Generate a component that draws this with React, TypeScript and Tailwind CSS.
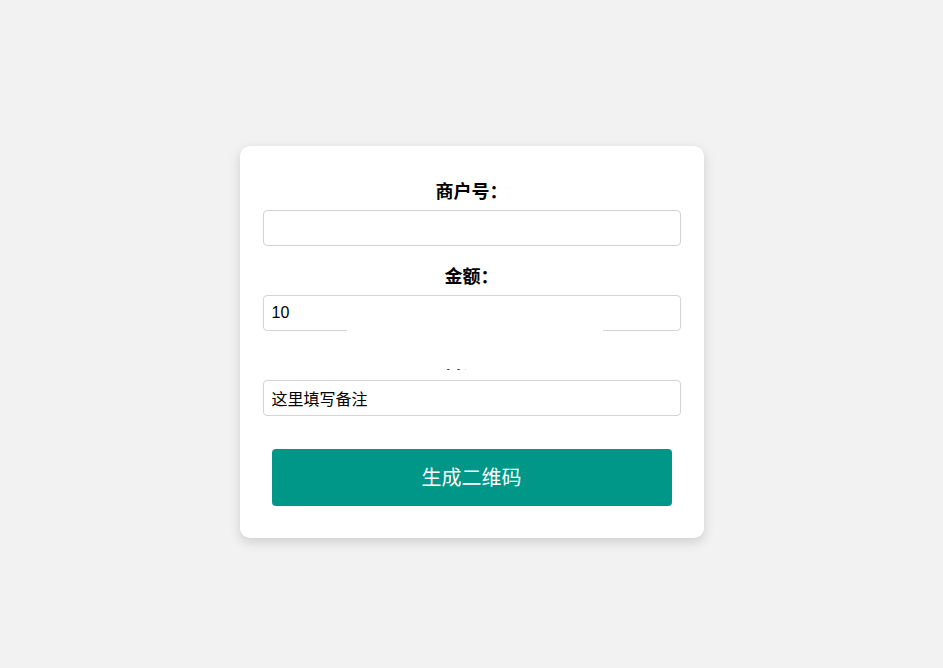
import React from "react";

const font = { fontFamily: '"Liberation Sans", Arial, "Noto Sans CJK SC", sans-serif' };

function Field({ label, value }: { label: string; value: string }) {
  return (
    <div className="flex flex-col">
      <label className="block text-center text-[18px] font-bold leading-[24px] text-black">{label}</label>
      <input
        readOnly
        value={value}
        className="mt-[6px] h-[36px] w-full rounded-[4px] border border-[#d4d4d4] bg-white px-[8px] text-[16px] text-black outline-none"
        style={font}
      />
    </div>
  );
}

export default function App() {
  return (
    <div className="flex min-h-[668px] w-full items-start justify-center bg-[#f2f2f2]" style={font}>
      <div className="relative mt-[146px] w-[464px] rounded-[10px] bg-white px-[23px] pt-[34px] pb-[32px] shadow-[0_4px_12px_rgba(0,0,0,0.15)]">
        <div className="flex flex-col gap-[19px]">
          <Field label="商户号：" value="" />
          <Field label="金额：" value="10" />
          <Field label="备注：" value="这里填写备注" />
        </div>
        <button className="mx-auto mt-[33px] flex h-[57px] w-[400px] items-center justify-center rounded-[4px] bg-[#009688] text-[20px] text-white">
          生成二维码
        </button>
        <div className="absolute left-[107px] top-[183px] h-[40px] w-[256px] bg-white" />
      </div>
    </div>
  );
}
